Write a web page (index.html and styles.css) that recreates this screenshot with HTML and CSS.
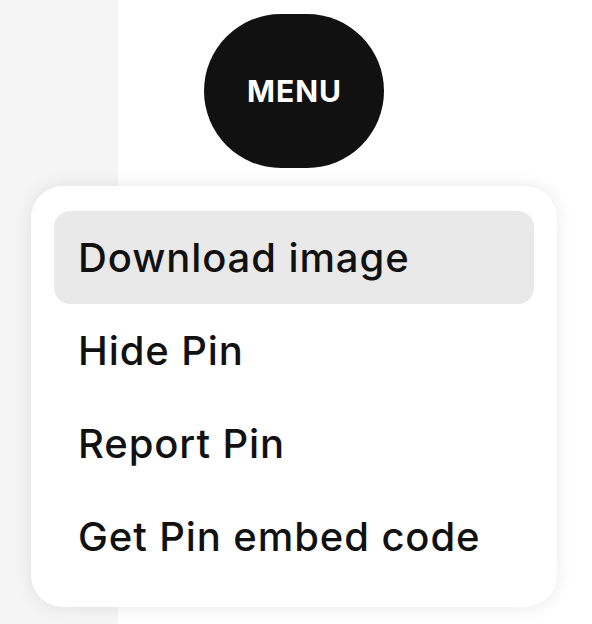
FILE: index.html
```html
<!DOCTYPE html>
<html lang="en">
<head>
<meta charset="utf-8">
<title>Menu</title>
<link rel="stylesheet" href="styles.css">
</head>
<body>
<div class="page">
  <aside class="side"></aside>
  <main class="main">
    <div class="trigger-row">
      <button class="menu-btn" type="button">MENU</button>
    </div>
  </main>
  <div class="dropdown" role="menu">
    <div class="item active" role="menuitem">Download image</div>
    <div class="item" role="menuitem">Hide Pin</div>
    <div class="item" role="menuitem">Report Pin</div>
    <div class="item" role="menuitem">Get Pin embed code</div>
  </div>
</div>
</body>
</html>
```

FILE: styles.css
```css
* { box-sizing: border-box; }
html, body { margin: 0; padding: 0; }
body {
  width: 592px;
  height: 624px;
  overflow: hidden;
  background: #ffffff;
  font-family: Inter, "Noto Sans", sans-serif;
  color: #111111;
}
.page {
  position: relative;
  display: flex;
  width: 592px;
  height: 624px;
}
.side {
  width: 118px;
  flex: none;
  background: #f5f5f5;
}
.main {
  flex: 1;
  background: #ffffff;
}
.trigger-row {
  padding-top: 14px;
  padding-left: 86px;
}
.menu-btn {
  display: flex;
  align-items: center;
  justify-content: center;
  width: 180px;
  height: 154px;
  border: 0;
  border-radius: 9999px;
  background: #111111;
  color: #ffffff;
  font-family: Inter, "Noto Sans", sans-serif;
  font-weight: 700;
  font-size: 30px;
  letter-spacing: 1px;
  padding: 0 0 0 1px;
}
.dropdown {
  position: absolute;
  left: 31px;
  top: 186px;
  width: 526px;
  padding: 25px 23px 24px;
  background: #ffffff;
  border-radius: 32px;
  box-shadow: 0 0 18px rgba(0, 0, 0, 0.09);
}
.item {
  height: 93px;
  display: flex;
  align-items: center;
  padding-left: 24px;
  border-radius: 16px;
  font-size: 40px;
  font-weight: 500;
  letter-spacing: 0.9px;
  color: #111111;
}
.item.active {
  background: #e9e9e9;
}
```
